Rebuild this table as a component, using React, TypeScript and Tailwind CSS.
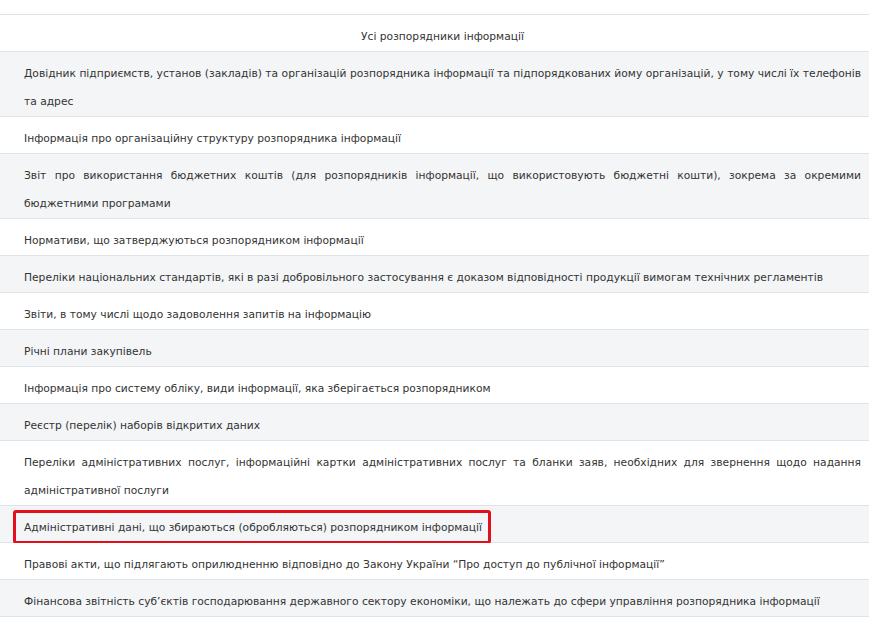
const items: string[] = [
  'Довідник підприємств, установ (закладів) та організацій розпорядника інформації та підпорядкованих йому організацій, у тому числі їх телефонів та адрес',
  'Інформація про організаційну структуру розпорядника інформації',
  'Звіт про використання бюджетних коштів (для розпорядників інформації, що використовують бюджетні кошти), зокрема за окремими бюджетними програмами',
  'Нормативи, що затверджуються розпорядником інформації',
  'Переліки національних стандартів, які в разі добровільного застосування є доказом відповідності продукції вимогам технічних регламентів',
  'Звіти, в тому числі щодо задоволення запитів на інформацію',
  'Річні плани закупівель',
  'Інформація про систему обліку, види інформації, яка зберігається розпорядником',
  'Реєстр (перелік) наборів відкритих даних',
  'Переліки адміністративних послуг, інформаційні картки адміністративних послуг та бланки заяв, необхідних для звернення щодо надання адміністративної послуги',
  'Адміністративні дані, що збираються (обробляються) розпорядником інформації',
  'Правові акти, що підлягають оприлюдненню відповідно до Закону України “Про доступ до публічної інформації”',
  'Фінансова звітність суб’єктів господарювання державного сектору економіки, що належать до сфери управління розпорядника інформації',
]

const highlighted = 10

export default function App() {
  return (
    <div className="w-[880px] h-[631px] bg-white pt-[14px] font-['DejaVu_Sans',sans-serif] text-[10.7px] text-[#333]">
      <div className="w-[869px] border-t border-[#dfe3e7]">
        <div className="pl-6 pr-2 pt-2 leading-[28px] text-center border-b border-[#dfe3e7]">
          Усі розпорядники інформації
        </div>
        {items.map((text, i) => (
          <div
            key={i}
            className={
              'relative pl-6 pr-2 pt-2 leading-[28px] text-justify border-b border-[#dfe3e7] ' +
              (i % 2 === 0 ? 'bg-[#f3f5f7]' : 'bg-white')
            }
          >
            {text}
            {i === highlighted && (
              <div className="absolute left-[13px] top-[4px] w-[478px] h-[34px] border-[3px] border-[#e3101c] rounded-[3px]" />
            )}
          </div>
        ))}
      </div>
    </div>
  )
}
